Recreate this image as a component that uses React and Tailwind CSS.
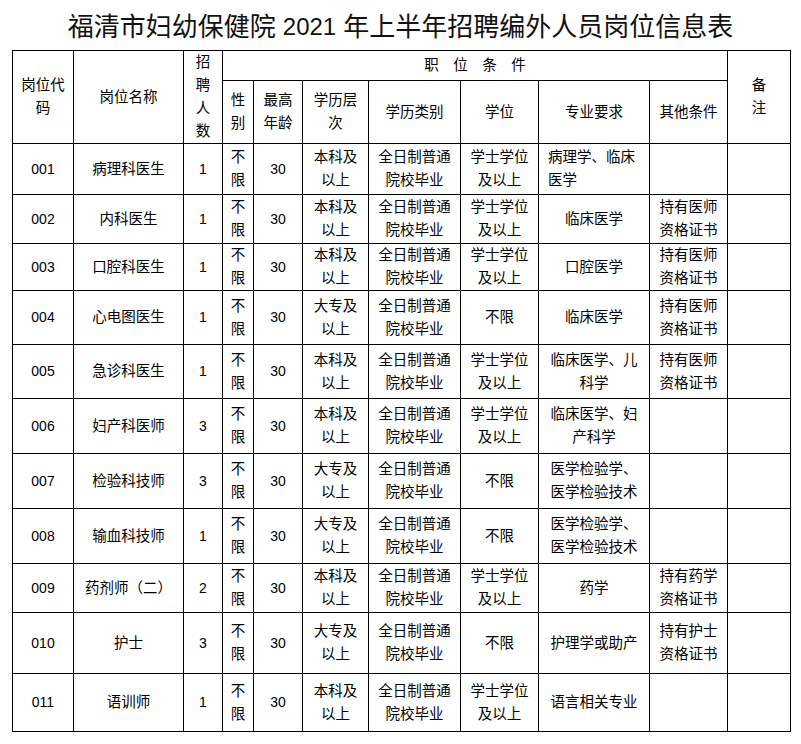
import React from "react";

const rows = [
  { code: "001", name: "病理科医生", num: "1", edu: ["本科及", "以上"], deg: ["学士学位", "及以上"], major: ["病理学、临床", "医学"], majorLeft: true, other: null, h: "h-[51px]" },
  { code: "002", name: "内科医生", num: "1", edu: ["本科及", "以上"], deg: ["学士学位", "及以上"], major: ["临床医学"], other: ["持有医师", "资格证书"], h: "h-[49px]" },
  { code: "003", name: "口腔科医生", num: "1", edu: ["本科及", "以上"], deg: ["学士学位", "及以上"], major: ["口腔医学"], other: ["持有医师", "资格证书"], h: "h-[47px]" },
  { code: "004", name: "心电图医生", num: "1", edu: ["大专及", "以上"], deg: ["不限"], major: ["临床医学"], other: ["持有医师", "资格证书"], h: "h-[54px]" },
  { code: "005", name: "急诊科医生", num: "1", edu: ["本科及", "以上"], deg: ["学士学位", "及以上"], major: ["临床医学、儿", "科学"], other: ["持有医师", "资格证书"], h: "h-[54px]" },
  { code: "006", name: "妇产科医师", num: "3", edu: ["本科及", "以上"], deg: ["学士学位", "及以上"], major: ["临床医学、妇", "产科学"], other: null, h: "h-[55px]" },
  { code: "007", name: "检验科技师", num: "3", edu: ["大专及", "以上"], deg: ["不限"], major: ["医学检验学、", "医学检验技术"], other: null, h: "h-[55px]" },
  { code: "008", name: "输血科技师", num: "1", edu: ["大专及", "以上"], deg: ["不限"], major: ["医学检验学、", "医学检验技术"], other: null, h: "h-[55px]" },
  { code: "009", name: "药剂师（二）", num: "2", edu: ["本科及", "以上"], deg: ["学士学位", "及以上"], major: ["药学"], other: ["持有药学", "资格证书"], h: "h-[49px]" },
  { code: "010", name: "护士", num: "3", edu: ["大专及", "以上"], deg: ["不限"], major: ["护理学或助产"], other: ["持有护士", "资格证书"], h: "h-[61px]" },
  { code: "011", name: "语训师", num: "1", edu: ["本科及", "以上"], deg: ["学士学位", "及以上"], major: ["语言相关专业"], other: null, h: "h-[58px]" },
];

const cell = "border border-black p-0 text-center align-middle whitespace-nowrap";

function Lines({ lines }) {
  if (!lines) return null;
  return lines.map((l, i) => (
    <React.Fragment key={i}>
      {i > 0 && <br />}
      {l}
    </React.Fragment>
  ));
}

export default function App() {
  return (
    <div
      className="bg-white text-black w-[801px] h-[744px]"
      style={{ fontFamily: '"Liberation Sans", "Noto Sans CJK SC", sans-serif' }}
    >
      <div className="h-[50px] flex items-center justify-center pt-[3px] text-[26px] leading-none text-[#111]">
        <span>福清市妇幼保健院</span>
        <span className="text-[24px] mx-[7px]">2021</span>
        <span>年上半年招聘编外人员岗位信息表</span>
      </div>
      <table className="ml-[12px] w-[778px] table-fixed border-collapse text-[14.5px] leading-[23px]">
        <colgroup>
          <col className="w-[61px]" />
          <col className="w-[110px]" />
          <col className="w-[39px]" />
          <col className="w-[31px]" />
          <col className="w-[49px]" />
          <col className="w-[66px]" />
          <col className="w-[92px]" />
          <col className="w-[78px]" />
          <col className="w-[111px]" />
          <col className="w-[78px]" />
          <col className="w-[63px]" />
        </colgroup>
        <tbody>
          <tr className="h-[30px]">
            <td rowSpan={2} className={cell}>
              岗位代<br />码
            </td>
            <td rowSpan={2} className={cell}>岗位名称</td>
            <td rowSpan={2} className={cell}>
              招<br />聘<br />人<br />数
            </td>
            <td colSpan={7} className={cell}>职　位　条　件</td>
            <td rowSpan={2} className={cell}>
              备<br />注
            </td>
          </tr>
          <tr className="h-[63px]">
            <td className={cell}>性<br />别</td>
            <td className={cell}>最高<br />年龄</td>
            <td className={cell}>学历层<br />次</td>
            <td className={cell}>学历类别</td>
            <td className={cell}>学位</td>
            <td className={cell}>专业要求</td>
            <td className={cell}>其他条件</td>
          </tr>
          {rows.map((r) => (
            <tr key={r.code} className={r.h}>
              <td className={cell + " text-[14px]"}>{r.code}</td>
              <td className={cell}>{r.name}</td>
              <td className={cell + " text-[14px]"}>{r.num}</td>
              <td className={cell}>不<br />限</td>
              <td className={cell + " text-[14px]"}>30</td>
              <td className={cell}><Lines lines={r.edu} /></td>
              <td className={cell}>全日制普通<br />院校毕业</td>
              <td className={cell}><Lines lines={r.deg} /></td>
              <td className={cell + (r.majorLeft ? " !text-left pl-[9px]" : "")}>
                <Lines lines={r.major} />
              </td>
              <td className={cell}><Lines lines={r.other} /></td>
              <td className={cell}></td>
            </tr>
          ))}
        </tbody>
      </table>
    </div>
  );
}
